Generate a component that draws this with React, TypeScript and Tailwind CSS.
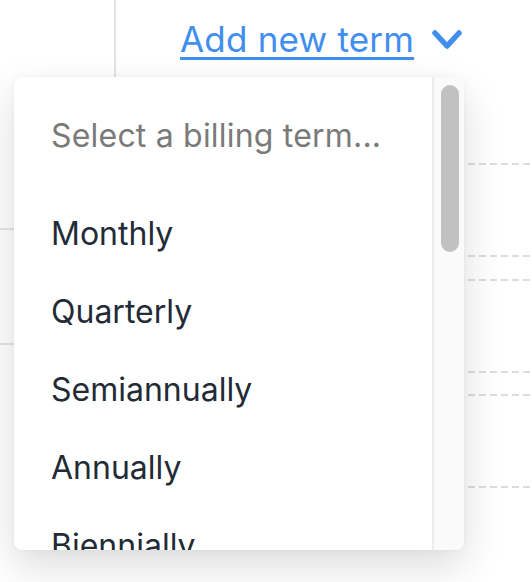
import React from "react";

const items = ["Monthly", "Quarterly", "Semiannually", "Annually", "Biennially"];

function Dashed() {
  return (
    <div className="h-[2px] w-full bg-[linear-gradient(to_right,#dcdcdc_7px,transparent_7px)] bg-[length:11px_2px] bg-repeat-x" />
  );
}

export default function App() {
  return (
    <div
      className="relative w-[532px] h-[582px] overflow-hidden bg-white flex items-start"
      style={{ fontFamily: "Inter, 'Noto Sans', sans-serif" }}
    >
      {/* left panel */}
      <div className="w-[116px] h-[530px] shrink-0 border-r-2 border-[#e2e2e2] flex flex-col">
        <div className="h-[230px] border-b-2 border-[#e6e6e6]" />
        <div className="h-[115px] border-b-2 border-[#e6e6e6]" />
      </div>

      {/* right panel */}
      <div className="flex-1 flex flex-col">
        <div className="h-[78px] pl-[64px] pt-[19px] flex items-start">
          <a className="text-[35px] leading-[40px] text-[#3f8ef0] underline decoration-[2.5px] underline-offset-[5px] tracking-[0.2px]">
            Add new term
          </a>
          <svg className="ml-[17px] mt-[10px]" width="32" height="22" viewBox="0 0 32 22">
            <polyline
              points="4,4 16,17 28,4"
              fill="none"
              stroke="#3f8ef0"
              strokeWidth="5.5"
              strokeLinecap="round"
              strokeLinejoin="round"
            />
          </svg>
        </div>
        <div className="mt-[85px]">
          <Dashed />
        </div>
        <div className="mt-[90px]">
          <Dashed />
        </div>
        <div className="mt-[22px]">
          <Dashed />
        </div>
        <div className="mt-[90px]">
          <Dashed />
        </div>
        <div className="mt-[21px]">
          <Dashed />
        </div>
        <div className="mt-[90px]">
          <Dashed />
        </div>
      </div>

      {/* dropdown menu */}
      <div className="absolute left-[14px] top-[77px] w-[450px] h-[473px] rounded-[8px] bg-white overflow-hidden flex shadow-[0_16px_40px_rgba(0,0,0,0.14),0_0_6px_rgba(0,0,0,0.04)]">
        <div className="flex-1 overflow-hidden pl-[37px] pt-[20px]">
          <div className="h-[78px] leading-[78px] text-[32px] text-[#7a7a7a] tracking-[0.2px]">
            Select a billing term...
          </div>
          <div className="mt-[20px]">
            {items.map((it) => (
              <div key={it} className="h-[78px] leading-[78px] text-[32px] text-[#222b36]">
                {it}
              </div>
            ))}
          </div>
        </div>
        <div className="w-[32px] shrink-0 border-l-2 border-[#ececec] bg-[#fafafa] pt-[8px] pl-[7px]">
          <div className="w-[18px] h-[167px] rounded-full bg-[#c1c1c1]" />
        </div>
      </div>
    </div>
  );
}
